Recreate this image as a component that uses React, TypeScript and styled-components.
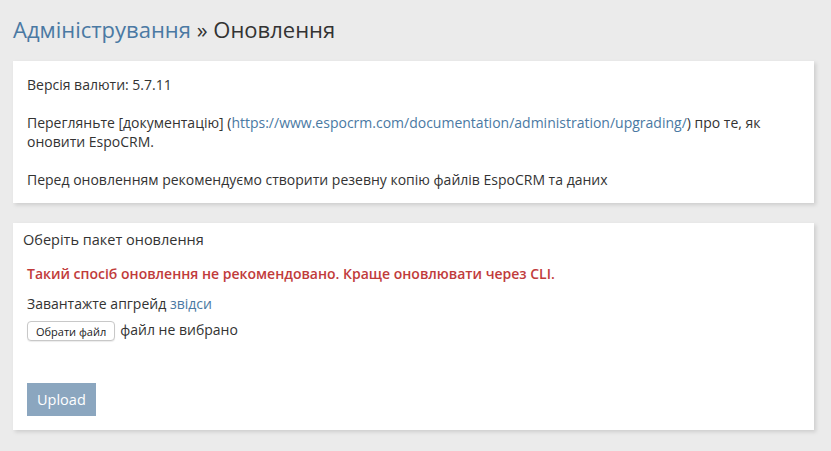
import styled, { createGlobalStyle } from "styled-components";

const GlobalStyle = createGlobalStyle`
  html, body {
    margin: 0;
    padding: 0;
    background: #ebebeb;
  }
  body {
    font-family: "Open Sans", "Liberation Sans", sans-serif;
    font-size: 14px;
    line-height: 19px;
    color: #333;
  }
`;

const Page = styled.div`
  padding: 0 17px 20px 13px;
`;

const Header = styled.h3`
  margin: 0;
  padding: 14px 0 0;
  height: 61px;
  box-sizing: border-box;
  font-size: 22px;
  line-height: 30px;
  font-weight: 400;
  color: #333;
`;

const Link = styled.a`
  color: #4a79a3;
  text-decoration: none;
`;

const Panel = styled.div<{ $gap?: number }>`
  background: #fff;
  box-shadow: 2px 2px 4px rgba(0, 0, 0, 0.13);
  margin-bottom: ${(p) => p.$gap ?? 0}px;
`;

const PanelHeading = styled.div`
  padding: 7px 10px 1px;
  font-size: 14.5px;
  line-height: 19px;
`;

const PanelBody = styled.div`
  padding: 14px;
`;

const Line = styled.div<{ $after?: number }>`
  margin-bottom: ${(p) => p.$after ?? 0}px;
`;

const Danger = styled.div`
  color: #c13b3b;
  font-weight: 600;
  margin-bottom: 11px;
`;

const FileRow = styled.div`
  display: flex;
  align-items: center;
  gap: 5px;
  margin-bottom: 42px;
`;

const FileButton = styled.span`
  display: inline-flex;
  align-items: center;
  height: 18px;
  padding: 0 8px;
  border: 1px solid #c8c8c8;
  border-radius: 4px;
  background: #fff;
  box-shadow: 0 1px 1px rgba(0, 0, 0, 0.08);
  font-size: 11px;
  color: #222;
  margin-top: 4px;
`;

const UploadButton = styled.button`
  font-family: inherit;
  font-size: 14.5px;
  color: #fff;
  background: #8ba6bf;
  border: none;
  height: 33px;
  padding: 0 10px;
  cursor: default;
`;

export default function App() {
  return (
    <>
      <GlobalStyle />
      <Page>
        <Header>
          <Link href="#">Адміністрування</Link> » Оновлення
        </Header>

        <Panel $gap={20}>
          <PanelBody>
            <Line $after={19}>Версія валюти: 5.7.11</Line>
            <Line>
              Перегляньте [документацію] (
              <Link href="#">
                https://www.espocrm.com/documentation/administration/upgrading/
              </Link>
              ) про те, як оновити EspoCRM.
            </Line>
            <Line $after={19} />
            <Line>
              Перед оновленням рекомендуємо створити резевну копію файлів
              EspoCRM та даних
            </Line>
          </PanelBody>
        </Panel>

        <Panel>
          <PanelHeading>Оберіть пакет оновлення</PanelHeading>
          <PanelBody>
            <Danger>
              Такий спосіб оновлення не рекомендовано. Краще оновлювати через
              CLI.
            </Danger>
            <Line $after={4}>
              Завантажте апгрейд <Link href="#">звідси</Link>
            </Line>
            <FileRow>
              <FileButton>Обрати файл</FileButton>
              <span>файл не вибрано</span>
            </FileRow>
            <UploadButton>Upload</UploadButton>
          </PanelBody>
        </Panel>
      </Page>
    </>
  );
}
